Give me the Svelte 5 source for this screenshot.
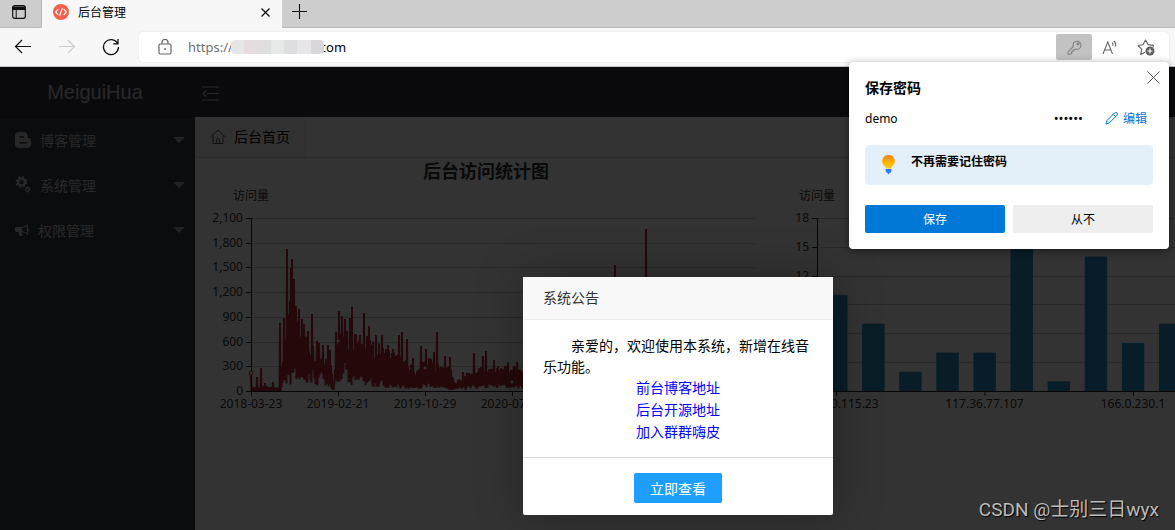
<script>
  const menu = [
    { icon: 'blog', label: '博客管理' },
    { icon: 'gears', label: '系统管理' },
    { icon: 'horn', label: '权限管理' }
  ];
  const notices = ['前台博客地址', '后台开源地址', '加入群群嗨皮'];

  // Daily visits, in plot units (x offset, height above the axis).
  const peaks = [
    [0, 18], [6, 14], [10, 23], [14, 8], [22, 9], [29, 68], [33, 73], [36, 142], [40, 123], [41, 132],
    [43, 112], [45, 85], [48, 82], [51, 72], [53, 67], [57, 60], [61, 77], [66, 50], [68, 48], [72, 46],
    [77, 46], [79, 41], [85, 59], [88, 80], [91, 75], [94, 72], [99, 73], [101, 84], [104, 57], [109, 56],
    [113, 78], [116, 55], [118, 65], [125, 56], [131, 56], [137, 46], [142, 42], [148, 56], [151, 59],
    [156, 52], [162, 33], [170, 45], [175, 42], [183, 39], [186, 59], [194, 35], [199, 34], [212, 19],
    [223, 38], [232, 35], [235, 40], [243, 31], [257, 29], [266, 29], [364, 126], [395, 162]
  ];
  const upper = [[0, 4], [29, 4], [32, 35], [36, 60], [40, 95], [45, 80], [55, 50], [65, 40], [79, 30], [83, 8], [85, 50], [100, 55], [115, 45], [130, 42], [145, 34], [158, 26], [165, 18], [175, 30], [200, 22], [204, 7], [212, 14], [230, 22], [504, 20]];
  const lower = [[0, 0], [29, 0], [33, 15], [55, 15], [75, 12], [82, 1], [86, 22], [100, 14], [120, 10], [145, 5], [162, 3], [175, 8], [200, 2], [235, 5], [504, 3]];

  function at(curve, x) {
    for (let i = 1; i < curve.length; i++) {
      const [x0, y0] = curve[i - 1];
      const [x1, y1] = curve[i];
      if (x <= x1) return y0 + ((y1 - y0) * (x - x0)) / (x1 - x0);
    }
    return curve[curve.length - 1][1];
  }
  const wave = (n) => {
    const s = Math.sin(n * 12.9898) * 43758.5453;
    return s - Math.floor(s);
  };
  const peakAt = new Map(peaks);
  const points = [];
  for (let x = 0; x <= 504; x++) {
    const high = peakAt.get(x) ?? at(upper, x) * (0.7 + 0.45 * wave(x));
    const low = at(lower, x) * (0.4 + 1.3 * wave(x + 700));
    points.push(`${56 + x},${(233 - high).toFixed(1)}`, `${56 + x + 0.5},${(233 - low).toFixed(1)}`);
  }
  const visits = points.join(' ');

  const leftTicks = ['2,100', '1,800', '1,500', '1,200', '900', '600', '300', '0'];
  const dates = ['2018-03-23', '2019-02-21', '2019-10-29', '2020-07-06'];
  const marks = [[56, 215], [143, 183], [230, 210], [317, 224]];
  const rightTicks = ['18', '15', '12', '', '', '', ''];
  const bars = [10, 7, 2, 4, 4, 17, 1, 14, 5, 7];
  const hosts = ['101.190.115.23', '117.36.77.107', '166.0.230.1'];
</script>

<div class="window">
  <div class="tabs">
    <button class="plain tabmenu" aria-label="标签页操作">
      <svg width="14" height="14" viewBox="0 0 14 14" fill="none" stroke="#111" stroke-width="1.2"><rect x=".7" y=".7" width="12.6" height="12.6" rx="2" /><path d="M1 2h12v2.4H1z" fill="#111" /><path d="M4.2 4v9" stroke-width="1" /></svg>
    </button>
    <div class="tab">
      <svg width="16" height="16" viewBox="0 0 16 16" fill="none"><circle cx="8" cy="8" r="8" fill="#f4604c" /><path d="M5 5.4 2.6 8 5 10.6M11 5.4 13.4 8 11 10.6M9.2 4.6 6.8 11.4" stroke="#fff" stroke-width="1.2" stroke-linecap="round" /></svg>
      <span>后台管理</span>
      <button class="plain" aria-label="关闭标签页"><svg width="9" height="9" viewBox="0 0 9 9" stroke="#111" stroke-width="1.3"><path d="M.5.5l8 8M8.500.5l-8 8" /></svg></button>
    </div>
    <button class="plain newtab" aria-label="新建标签页"><svg width="15" height="15" viewBox="0 0 15 15" stroke="#111" stroke-width="1.1"><path d="M7.500 0v15M0 7.500h15" /></svg></button>
  </div>

  <div class="toolbar">
    <button class="plain nav" aria-label="后退"><svg width="18" height="16" viewBox="0 0 18 16" fill="none" stroke="#111" stroke-width="1.2"><path d="M8 1 1.500 7.500 8 14M1.500 7.500H17" /></svg></button>
    <button class="plain nav" aria-label="前进"><svg width="18" height="16" viewBox="0 0 18 16" fill="none" stroke="#ccc" stroke-width="1.2"><path d="M10 1l6.500 6.500L10 14M16.500 7.500H1" /></svg></button>
    <button class="plain nav" aria-label="刷新"><svg width="18" height="18" viewBox="0 0 18 18" fill="none" stroke="#111" stroke-width="1.3"><path d="M15.600 5.500A7.500 7.500 0 1 0 16.500 9M16 1v4.800h-4.800" /></svg></button>
    <div class="address">
      <svg class="lock" width="14" height="16" viewBox="0 0 14 16" fill="none" stroke="#666" stroke-width="1.2"><rect x="1" y="5" width="12" height="10" rx="1.500" /><path d="M4 5V3.500a3 3 0 0 1 6 0V5" /><circle cx="7" cy="10" r="1" fill="#666" stroke="none" /></svg>
      <span class="url"><span class="scheme">https://</span><span class="mosaic"><i></i><i></i><i></i><i></i><i></i><i></i><i></i></span><span>com</span></span>
      <button class="plain tool active" aria-label="密码">
        <svg width="15" height="15" viewBox="0 0 15 15" fill="none" stroke="#808080" stroke-width="1.1"><path d="M6.200 6.600A4 4 0 1 1 8.600 9L7.700 9.800H6.300v1.500H4.800V13L3.600 14.200H1v-2.400z" stroke-linejoin="round" /><circle cx="11" cy="4" r=".9" /></svg>
      </button>
      <button class="plain tool" aria-label="朗读此页"><svg width="17" height="16" viewBox="0 0 17 16" fill="none" stroke="#666" stroke-width="1.1"><path d="M1 15 5.800 3 10.500 15M2.500 11h6.600M10 3.500c1 1 1.200 2.200.8 3.400M12 2c1.600 1.600 2 3.500 1.300 5.600" /></svg></button>
      <button class="plain tool" aria-label="添加到收藏夹"><svg width="18" height="17" viewBox="0 0 18 17" fill="none" stroke="#666" stroke-width="1.1"><path d="M16 8.300 16.300 6.400l-5.100-.8L8.500 1 6 5.700l-5 .8 3.600 3.700L3.700 15.500l4.500-2.300" stroke-linejoin="round" /><circle cx="13" cy="12" r="4.500" fill="#5c5c5c" stroke="none" /><path d="M13 9.500v5M10.500 12h5" stroke="#fff" stroke-width="1.200" /></svg></button>
    </div>

    <section class="save">
      <button class="plain dismiss" aria-label="关闭"><svg width="13" height="13" viewBox="0 0 13 13" stroke="#555" stroke-width="1"><path d="M.5.5l12 12M12.500.5l-12 12" /></svg></button>
      <h2>保存密码</h2>
      <div class="account">
        <span>demo</span>
        <span class="secret">••••••</span>
        <button class="plain edit"><svg width="13" height="13" viewBox="0 0 13 13" fill="none" stroke="#0078d7" stroke-width="1"><path d="M1 12l.9-3.400L9.600.9a1.500 1.500 0 0 1 2.400 2.300L4.300 11zM8.300 2.300l2.300 2.300" stroke-linejoin="round" /></svg>编辑</button>
      </div>
      <div class="tip">
        <svg width="13" height="20" viewBox="0 0 13 20">
          <defs><linearGradient id="glow" x1="0" y1="0" x2="0" y2="1"><stop offset="0" stop-color="#f58220" /><stop offset=".6" stop-color="#ffb900" /><stop offset="1" stop-color="#ffc81f" /></linearGradient></defs>
          <path d="M6.500 0a6.200 6.200 0 0 1 3.800 11.200c-.8.700-1 1.400-1.200 2.400H3.900c-.2-1-.4-1.700-1.200-2.400A6.200 6.200 0 0 1 6.500 0z" fill="url(#glow)" />
          <path d="M3.500 14h6l-.5 3.500H8L6.500 19.500 5 17.500H4z" fill="#2f78f0" />
        </svg>
        <strong>不再需要记住密码</strong>
      </div>
      <div class="choices"><button class="primary">保存</button><button>从不</button></div>
    </section>
  </div>

  <div class="app">
    <header>
      <h1>MeiguiHua</h1>
      <button class="plain fold" aria-label="收起菜单"><svg width="17" height="15" viewBox="0 0 17 15" fill="none" stroke="#c8c8c8" stroke-width="1.200"><path d="M0 1h17M5 7.500h12M0 14h17M4 4.500 1 7.500l3 3" /></svg></button>
    </header>
    <div class="body">
      <nav>
        {#each menu as item}
          <a href="#{item.icon}">
            {#if item.icon === 'blog'}
              <svg width="17" height="16" viewBox="0 0 17 16" fill="currentColor" fill-rule="evenodd"><path d="M4 0h4.500a4 4 0 0 1 4 4v1c0 .8.5 1.200 1.300 1.200 1.600 0 2.200.6 2.200 1.600V12a4 4 0 0 1-4 4H4a4 4 0 0 1-4-4V4a4 4 0 0 1 4-4zM5 4a.9.9 0 0 0 0 1.800h3A.9.9 0 0 0 8 4zM5 10a.9.9 0 0 0 0 1.800h6a.9.9 0 0 0 0-1.800z" /></svg>
            {:else if item.icon === 'gears'}
              <svg width="17" height="17" viewBox="0 0 17 17" fill="none" stroke="currentColor"><circle cx="6.500" cy="6" r="3.400" stroke-width="2.400" /><circle cx="6.500" cy="6" r="5" stroke-width="1.800" stroke-dasharray="2 1.927" /><circle cx="12.500" cy="13.500" r="1.700" stroke-width="1.400" /><circle cx="12.500" cy="13.500" r="2.600" stroke-width="1" stroke-dasharray="1.200 1.133" /></svg>
            {:else}
              <svg width="15" height="14" viewBox="0 0 15 14" fill="currentColor" fill-rule="evenodd"><path d="M1.500 4H6c3 0 5-1.300 7-3v4.500c1.300.2 1.300 2.300 0 2.500V12C11 10.500 9.500 9.500 7 9.300c-.7.900-.2 1.700.8 2.800-.7 1.200-2.800 1.100-3.500.4C3.800 11.300 3.400 10 3.600 9H1.500A1.400 1.400 0 0 1 0 7.600V5.400A1.400 1.400 0 0 1 1.500 4zM7 5v3.200c1.800.2 3.300.8 4.800 1.800V3.200C10.300 4.200 8.800 4.800 7 5z" /></svg>
            {/if}
            <span>{item.label}</span><b></b>
          </a>
        {/each}
      </nav>
      <main>
        <div class="pages">
          <a href="#home"><svg width="16" height="15" viewBox="0 0 16 15" fill="none" stroke="#555" stroke-width="1"><path d="M.5 8 8 1l7.500 7M3 6.500v8h10v-8M6.500 14.500V11a1.500 1.500 0 0 1 3 0v3.500" /></svg>后台首页</a>
        </div>
        <div class="charts">
          <svg class="chart" viewBox="0 0 566 270" role="img" aria-label="后台访问统计图">
            <text x="291" y="20" class="title">后台访问统计图</text>
            <text x="56" y="42" class="mid">访问量</text>
            {#each leftTicks as label, i}
              {@const y = Math.round(60 + i * 24.71) + 0.5}
              <path d="M56 {y}H560" class="grid" /><path d="M51 {y}h5" class="axis" />
              <text x="48" y={y + 3} class="end">{label}</text>
            {/each}
            <polyline points={visits} class="visits" />
            <path d="M56.500 60V233.500H560" class="axis" />
            {#each dates as date, i}
              <path d="M{56.5 + i * 87} 233v5" class="axis" /><text x={56 + i * 87} y="250" class="mid">{date}</text>
            {/each}
            {#each marks as [x, y]}<circle cx={x} cy={y} r="2" class="mark" />{/each}
          </svg>
          <svg class="chart" viewBox="0 0 566 270" role="img" aria-label="访问来源">
            <text x="56" y="42" class="mid">访问量</text>
            {#each rightTicks as label, i}
              {@const y = Math.round(60 + i * 28.83) + 0.5}
              <path d="M56 {y}H560" class="grid" /><path d="M51 {y}h5" class="axis" />
              {#if label}<text x="48" y={y + 3} class="end">{label}</text>{/if}
            {/each}
            {#each bars as value, i}
              <rect x={64 + i * 37.1} y={233 - value * 9.61} width="22.500" height={value * 9.61} class="bar" />
            {/each}
            <path d="M56.500 60V233.500H560" class="axis" />
            {#each hosts as host, i}
              <path d="M{75.5 + i * 148.5} 233v5" class="axis" /><text x={75 + i * 148.5} y="250" class="mid">{host}</text>
            {/each}
          </svg>
        </div>
      </main>
    </div>
    <div class="shade"></div>
    <section class="notice">
      <h2>系统公告</h2>
      <div class="message">
        <p>亲爱的，欢迎使用本系统，新增在线音乐功能。</p>
        {#each notices as text}<a href="#notice">{text}</a>{/each}
      </div>
      <footer><button>立即查看</button></footer>
    </section>
    <div class="credit">CSDN @士别三日wyx</div>
  </div>
</div>

<style>
  :global(body) { overflow: hidden; }
  .window { display: flex; flex-direction: column; height: 100vh; font: 14px "Noto Sans", "Noto Sans CJK SC", sans-serif; color: #000; }
  .window * { box-sizing: border-box; }
  button { font: inherit; border: 0; cursor: pointer; }
  .plain { background: none; padding: 0; display: flex; align-items: center; justify-content: center; color: inherit; }
  a { text-decoration: none; color: inherit; }
  h1, h2, p { margin: 0; font-weight: 400; }
  svg { flex: none; display: block; }

  .tabs { display: flex; height: 28px; background: #cdcdcd; font-size: 12px; flex: none; }
  .tabmenu { width: 42px; padding: 0 4px 4px 0; border-right: 1px solid #bbb; border-bottom: 1px solid #bbb; border-radius: 0 0 4px 0; }
  .tab { width: 240px; background: #f7f7f7; display: flex; align-items: center; gap: 9px; padding: 0 12px 4px 11px; }
  .tab span { flex: 1; }
  .newtab { width: 34px; padding-bottom: 4px; }
  .tabs::after { content: ""; flex: 1; }
  .tabs .newtab, .tabs::after { border-bottom: 1px solid #bbb; }

  .toolbar { position: relative; z-index: 2; display: flex; align-items: center; height: 39px; flex: none; background: #f7f7f7; border-bottom: 1px solid #bfc4c6; padding: 0 6px 0 1px; }
  .nav { width: 44px; }
  .address { flex: 1; margin-left: 6px; height: 30px; background: #fff; border-radius: 4px; box-shadow: 0 0 2px #ddd; display: flex; align-items: center; padding-right: 5px; }
  .lock { margin: 0 16px 0 19px; }
  .url { flex: 1; display: flex; align-items: center; font-size: 13px; }
  .scheme { color: #707070; }
  .mosaic { display: flex; height: 14px; width: 93px; margin: 0 -4px 0 -2px; border-radius: 4px; overflow: hidden; z-index: 1; }
  .mosaic i { flex: 1; background: #e6e6e8; }
  .mosaic i:nth-child(2) { background: #e4dcde; }
  .mosaic i:nth-child(3) { background: #dededf; }
  .mosaic i:nth-child(4) { background: #e6e9e8; }
  .mosaic i:nth-child(5) { background: #dedee0; }
  .mosaic i:nth-child(7) { background: #d9d7da; }
  .tool { width: 36px; height: 26px; border-radius: 2px; }
  .active { background: #c2c2c2; }

  .save { position: absolute; right: 6px; top: 34px; width: 320px; background: #fff; border-radius: 4px; padding: 16px; box-shadow: 0 2px 8px rgba(0, 0, 0, .45); font-size: 12px; }
  .dismiss { position: absolute; right: 9px; top: 9px; }
  .save h2 { font-size: 14px; font-weight: 700; line-height: 20px; }
  .account { display: flex; align-items: center; height: 20px; margin-top: 10px; padding-right: 6px; }
  .secret { margin-left: auto; font-size: 13px; }
  .edit { color: #0078d7; gap: 5px; margin-left: 22px; }
  .tip { display: flex; gap: 16px; height: 40px; margin-top: 17px; padding: 10px 17px; background: #e3f0fa; border-radius: 4px; }
  .tip strong { line-height: 14px; }
  .choices { display: grid; grid-template-columns: 1fr 1fr; gap: 8px; margin-top: 20px; }
  .choices button { height: 28px; padding: 0; border-radius: 2px; background: #eee; }
  .choices .primary { background: #0078d7; color: #fff; }

  .app { position: relative; flex: 1; display: flex; flex-direction: column; min-height: 0; overflow: hidden; }
  header { display: flex; align-items: center; height: 50px; flex: none; background: #33363f; }
  h1 { width: 195px; padding-right: 5px; text-align: center; font: 20px "Liberation Sans", sans-serif; color: #c8c8c8; }
  .fold { margin: 3px 0 0 7px; }
  .body { flex: 1; display: flex; min-height: 0; }
  nav { width: 195px; flex: none; background: #393d49; border-top: 1px solid #23262e; }
  nav a { display: flex; align-items: center; gap: 8px; height: 45px; padding: 0 10px 2px 15px; color: #c4c4c4; }
  nav span { flex: 1; }
  nav b { border: 6px solid transparent; border-top-color: #aaa; border-bottom: 0; }
  main { flex: 1; min-width: 0; background: #fff; overflow: hidden; }
  .pages { height: 41px; border-bottom: 1px solid #d8d8d8; }
  .pages a { display: flex; align-items: center; gap: 8px; width: 111px; height: 40px; padding: 0 0 2px 15px; background: #f6f6f6; }
  .charts { display: flex; }
  .chart { width: 566px; height: 270px; }
  text { font-size: 12px; fill: #333; }
  .title { font-size: 18px; font-weight: 700; text-anchor: middle; }
  .mid { text-anchor: middle; }
  .end { text-anchor: end; }
  .grid { stroke: #ccc; }
  .axis { stroke: #222; fill: none; }
  .visits { fill: none; stroke: #b82c34; stroke-width: 2; stroke-linejoin: bevel; }
  .mark { fill: #fff; stroke: #c23531; }
  .bar { fill: #2f8fc8; }
  .shade { position: absolute; inset: 0; background: rgba(0, 0, 0, .8); }

  .notice { position: absolute; left: 523px; top: 210px; width: 310px; background: #fff; border-radius: 2px; box-shadow: 1px 1px 50px rgba(0, 0, 0, .3); }
  .notice h2 { height: 43px; line-height: 42px; padding-left: 20px; font-size: 14px; color: #333; background: #f8f8f8; border-bottom: 1px solid #eee; }
  .message { padding: 15px 20px 14px; line-height: 22px; }
  .message p { text-indent: 2em; line-height: 21px; }
  .message a { display: block; text-align: center; color: #00f; }
  footer { padding: 15px 15px 12px; text-align: center; border-top: 1px solid #ddd; }
  footer button { display: block; margin: 0 auto; height: 30px; padding: 0 16px; color: #fff; background: #1e9fff; border-radius: 2px; }
  .credit { position: absolute; right: 16px; bottom: 6px; font: 19px/28px Roboto, "Noto Sans CJK SC", sans-serif; color: #bbb; text-shadow: 1px 1px 1px #000; }
</style>
